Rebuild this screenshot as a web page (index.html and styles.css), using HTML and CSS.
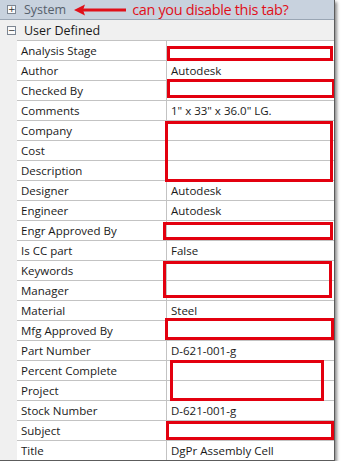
FILE: index.html
```html
<!DOCTYPE html>
<html lang="en">
  <head>
    <meta charset="UTF-8" />
    <title>Properties</title>
    <link rel="stylesheet" href="styles.css">
  </head>
  <body>
    <div class="panel">
      <div class="cat cat-system">
        <span class="toggle">+</span>
        <span class="cat-label">System</span>
        <svg class="arrow" width="52" height="12" viewBox="0 0 52 12">
          <path d="M0 6 L11 0.5 L9 6 L11 11.5 Z" fill="#e0101a" />
          <rect x="8" y="4.5" width="44" height="3" fill="#e0101a" />
        </svg>
        <span class="note">can you disable this tab?</span>
      </div>
      <div class="cat">
        <span class="toggle">&minus;</span>
        <span class="cat-label">User Defined</span>
      </div>
      <div class="rows">
        <div class="row"><div class="name">Analysis Stage</div><div class="value"></div></div>
        <div class="row"><div class="name">Author</div><div class="value">Autodesk</div></div>
        <div class="row"><div class="name">Checked By</div><div class="value"></div></div>
        <div class="row"><div class="name">Comments</div><div class="value">1" x 33" x 36.0" LG.</div></div>
        <div class="row"><div class="name">Company</div><div class="value"></div></div>
        <div class="row"><div class="name">Cost</div><div class="value"></div></div>
        <div class="row"><div class="name">Description</div><div class="value"></div></div>
        <div class="row"><div class="name">Designer</div><div class="value">Autodesk</div></div>
        <div class="row"><div class="name">Engineer</div><div class="value">Autodesk</div></div>
        <div class="row"><div class="name">Engr Approved By</div><div class="value"></div></div>
        <div class="row"><div class="name">Is CC part</div><div class="value">False</div></div>
        <div class="row"><div class="name">Keywords</div><div class="value"></div></div>
        <div class="row"><div class="name">Manager</div><div class="value"></div></div>
        <div class="row"><div class="name">Material</div><div class="value">Steel</div></div>
        <div class="row"><div class="name">Mfg Approved By</div><div class="value"></div></div>
        <div class="row"><div class="name">Part Number</div><div class="value">D-621-001-g</div></div>
        <div class="row"><div class="name">Percent Complete</div><div class="value"></div></div>
        <div class="row"><div class="name">Project</div><div class="value"></div></div>
        <div class="row"><div class="name">Stock Number</div><div class="value">D-621-001-g</div></div>
        <div class="row"><div class="name">Subject</div><div class="value"></div></div>
        <div class="row"><div class="name">Title</div><div class="value">DgPr Assembly Cell</div></div>
      </div>

      <!-- red annotation boxes -->
      <div class="mark mark-analysis"></div>
      <div class="mark mark-checked"></div>
      <div class="mark mark-company"></div>
      <div class="mark mark-engr"></div>
      <div class="mark mark-keywords"></div>
      <div class="mark mark-mfg"></div>
      <div class="mark mark-percent"></div>
      <div class="mark mark-subject"></div>
    </div>
  </body>
</html>
```

FILE: styles.css
```css
body {
  margin: 0;
  padding: 0;
  background: #fff;
  font-family: "Open Sans", "Noto Sans", sans-serif;
  font-size: 11.5px;
  color: #1a1a1a;
}

.panel {
  position: relative;
  width: 334px;
  height: 460px;
  background: #f0f0f0;
  border-right: 1px solid #5c5c5c;
  border-bottom: 1px solid #5c5c5c;
  box-shadow: 2px 2px 3px rgba(0, 0, 0, 0.45);
  overflow: hidden;
}

.cat {
  height: 20px;
  display: flex;
  align-items: center;
  box-sizing: border-box;
}
.cat-system {
  background: #c8d2de;
  border-bottom: 1px solid #9aa6b4;
  color: #56606c;
}
.cat-label {
  font-size: 12.5px;
}
.toggle {
  width: 7px;
  height: 7px;
  margin: 0 8px 0 7px;
  border: 1px solid #7d8692;
  background: #fafafa;
  font-size: 9px;
  line-height: 7px;
  text-align: center;
  color: #333;
  font-family: "DejaVu Sans", sans-serif;
}

.arrow {
  margin-left: 8px;
}
.note {
  margin-left: 6px;
  color: #e0101a;
  font-size: 14.5px;
  letter-spacing: -0.35px;
}

.rows {
  margin-left: 17px;
  background: #fff;
}
.row {
  display: flex;
  height: 20px;
  box-sizing: border-box;
  border-top: 1px solid #c3c3c3;
}
.row .name {
  width: 150px;
  box-sizing: border-box;
  padding-left: 4px;
  border-right: 1px solid #c3c3c3;
  line-height: 19px;
  white-space: nowrap;
}
.row .value {
  flex: 1;
  padding-left: 4px;
  line-height: 19px;
  white-space: nowrap;
}

.mark {
  position: absolute;
  border: 3px solid #e3000f;
  box-sizing: border-box;
}
.mark-analysis { left: 167px; top: 46px;  width: 166px; height: 15px; }
.mark-checked  { left: 167px; top: 79px;  width: 168px; height: 19px; }
.mark-company  { left: 165px; top: 121px; width: 168px; height: 61px; }
.mark-engr     { left: 163px; top: 222px; width: 170px; height: 18px; }
.mark-keywords { left: 163px; top: 261px; width: 169px; height: 37px; }
.mark-mfg      { left: 165px; top: 318px; width: 169px; height: 22px; }
.mark-percent  { left: 170px; top: 360px; width: 154px; height: 41px; }
.mark-subject  { left: 166px; top: 421px; width: 168px; height: 19px; }
```
